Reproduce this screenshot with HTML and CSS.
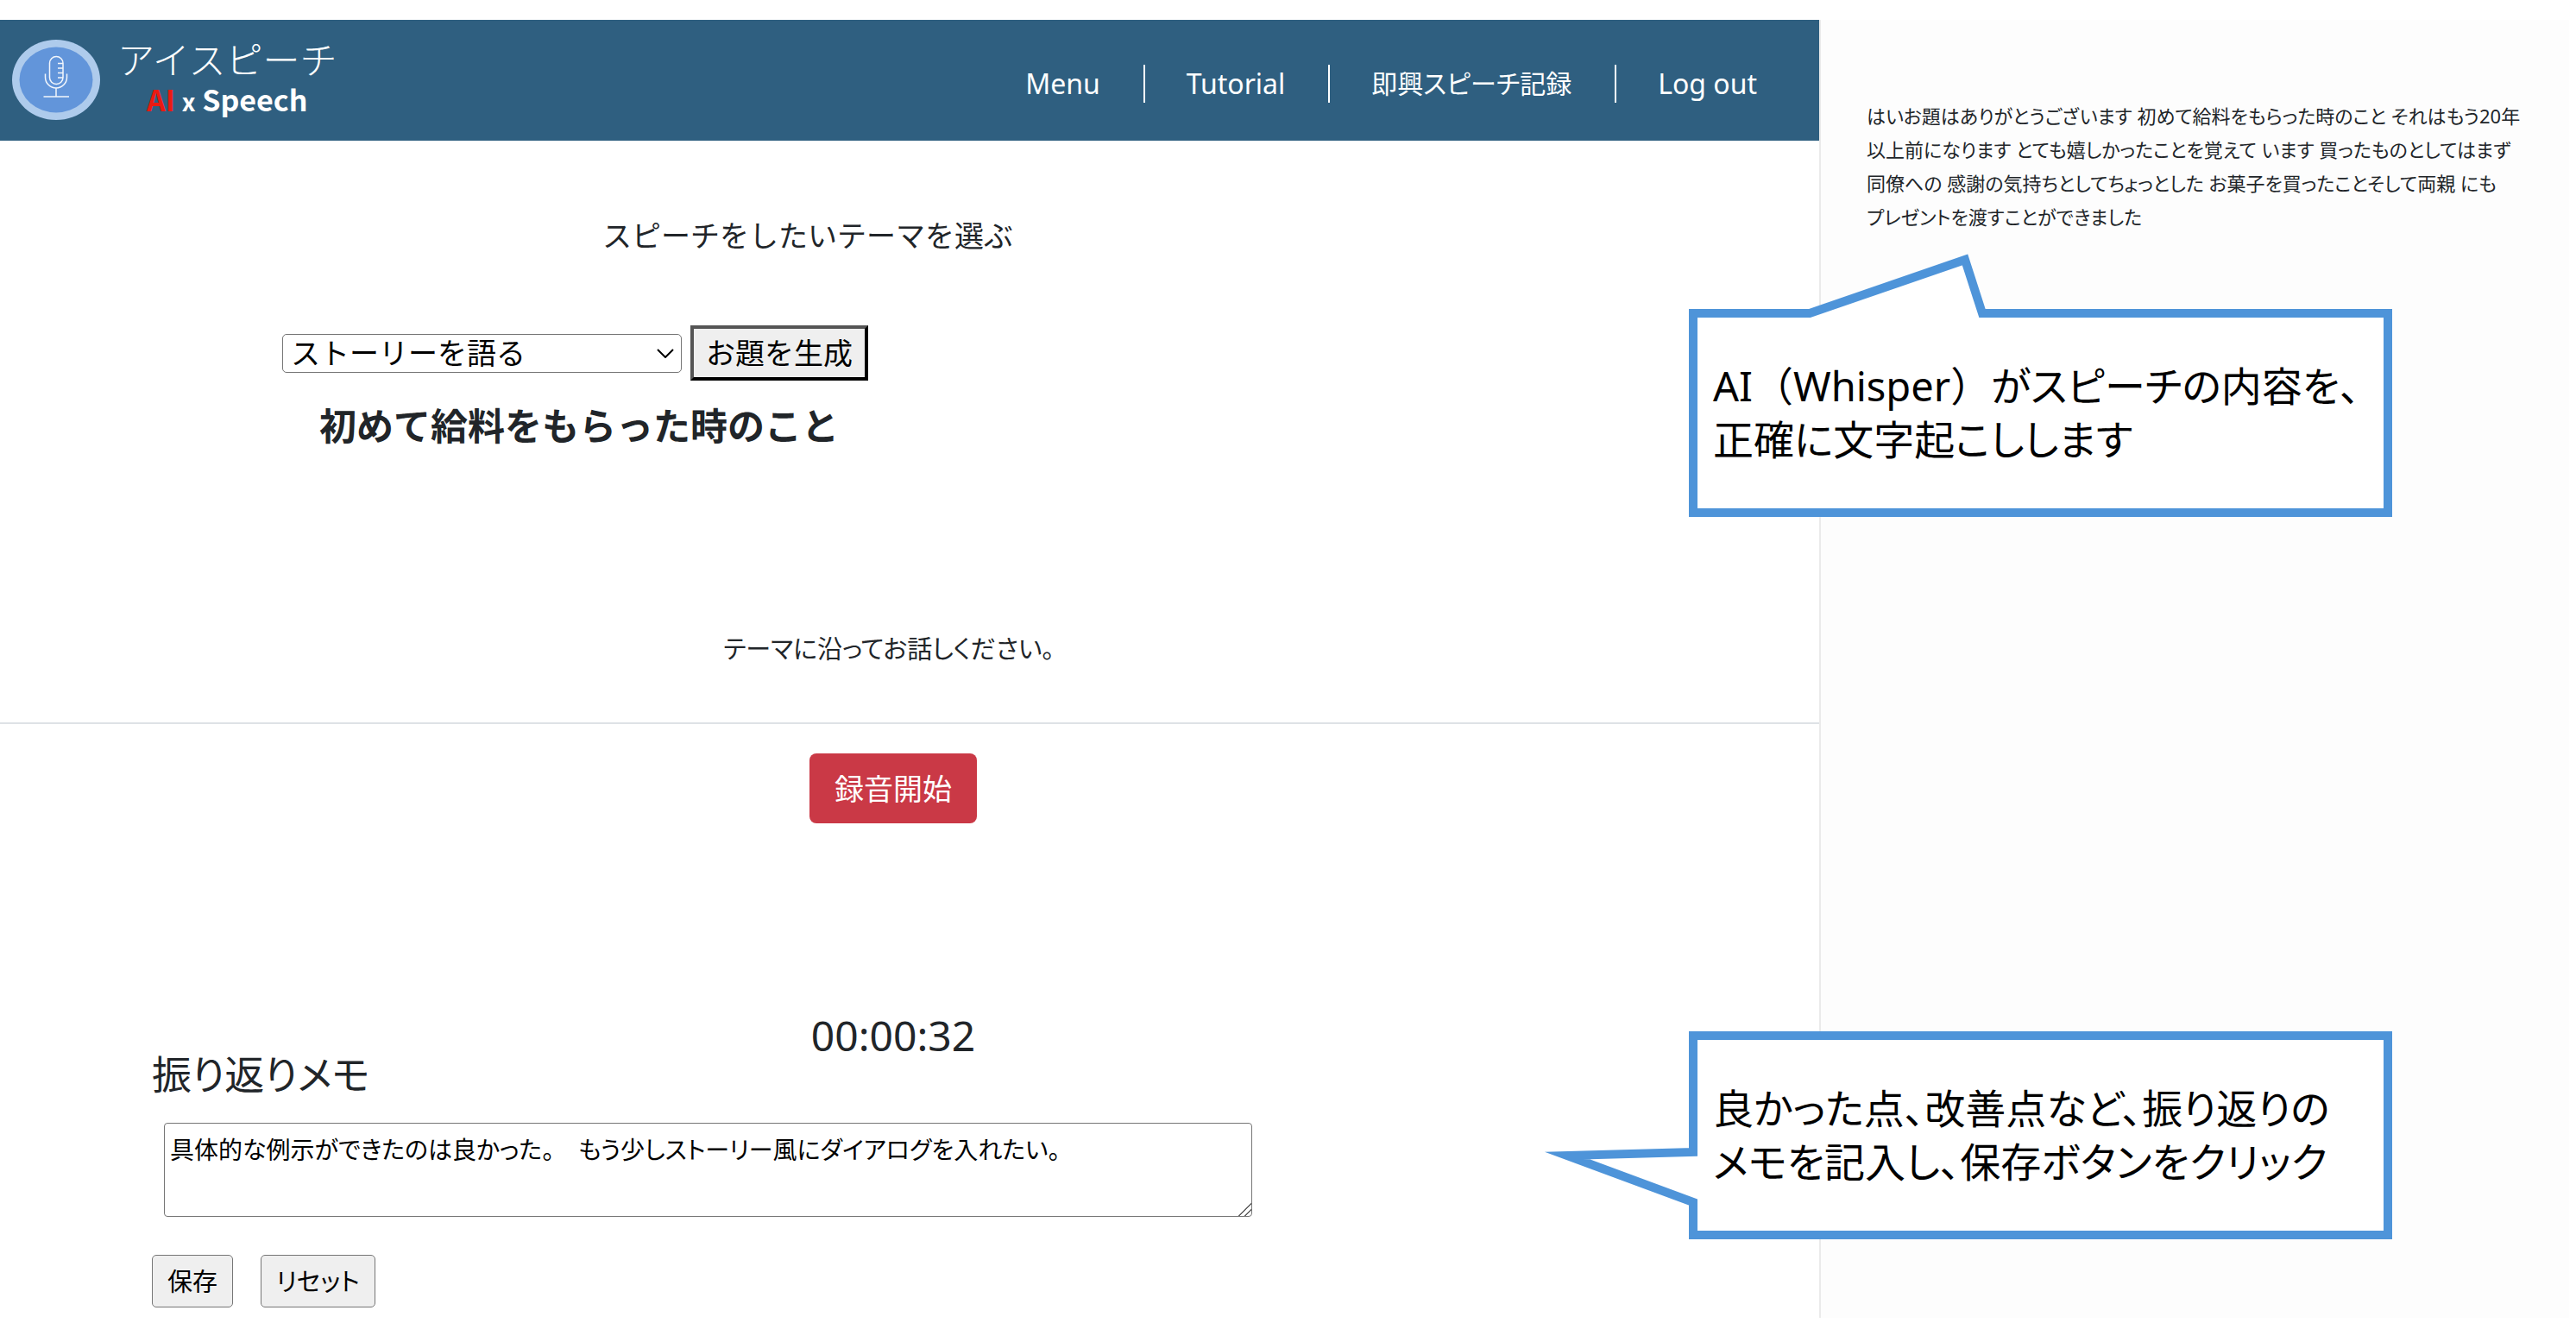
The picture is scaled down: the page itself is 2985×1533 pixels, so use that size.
FILE: index.html
```html
<!DOCTYPE html>
<html lang="ja">
<head>
<meta charset="utf-8">
<title>アイスピーチ</title>
<link rel="stylesheet" href="styles.css">
</head>
<body>
<div class="page">
  <div class="app">
    <header class="header">
      <a class="brand" href="#">
        <svg class="brand-mark" viewBox="0 0 102 93" aria-hidden="true">
          <ellipse cx="51" cy="46.500" rx="51" ry="46.500" fill="#aecbec"/>
          <ellipse cx="51" cy="46.500" rx="42.500" ry="38" fill="#6295da"/>
          <g fill="none" stroke="#f2f6fc" stroke-width="1.500">
            <rect x="43.500" y="19.500" width="15.500" height="32" rx="7.750"/>
            <path d="M53 27.500h6M53 33h6M53 38.500h6M53 44h6M38.500 39.500v4a12.500 12.500 0 0 0 25 0v-4M51 56v9.500M36.500 66h29.500"/>
          </g>
        </svg>
        <span class="brand-text">
          <span class="brand-name">アイスピーチ</span>
          <span class="brand-sub"><span class="brand-ai">AI</span> <span class="brand-x">x</span> Speech</span>
        </span>
      </a>
      <nav class="nav">
        <a href="#">Menu</a>
        <a href="#">Tutorial</a>
        <a class="nav-ja" href="#">即興スピーチ記録</a>
        <a href="#">Log out</a>
      </nav>
    </header>
    <main>
      <section class="theme">
        <label class="theme-label" for="theme">スピーチをしたいテーマを選ぶ</label>
        <div class="picker">
          <span class="select">
            <select id="theme"><option>ストーリーを語る</option></select>
            <svg viewBox="0 0 20 11" aria-hidden="true"><path d="M1 1l9 9 9-9" fill="none" stroke="#000" stroke-width="2"/></svg>
          </span>
          <button class="generate" type="button">お題を生成</button>
        </div>
        <h1 class="topic">初めて給料をもらった時のこと</h1>
        <p class="guide">テーマに沿ってお話しください。</p>
      </section>
      <section class="recorder">
        <button class="record" type="button">録音開始</button>
        <time class="timer">00:00:32</time>
      </section>
      <form class="memo">
        <label class="memo-label" for="memo">振り返りメモ</label>
        <textarea class="memo-text" id="memo">具体的な例示ができたのは良かった。　もう少しストーリー風にダイアログを入れたい。</textarea>
        <div class="actions">
          <button type="button">保存</button>
          <button type="button">リセット</button>
        </div>
      </form>
    </main>
  </div>
  <aside class="transcript">
    <p>はいお題はありがとうございます 初めて給料をもらった時のこと それはもう20年<br>以上前になります とても嬉しかったことを覚えて います 買ったものとしてはまず<br>同僚への 感謝の気持ちとしてちょっとした お菓子を買ったことそして両親 にも<br>プレゼントを渡すことができました</p>
  </aside>
  <div class="callout callout-transcript">
    <svg viewBox="0 0 815 241" aria-hidden="true"><path d="M5 5H140L320-57 340 5H810V236H5Z"/></svg>
    <p>AI<span class="full-width">（Whisper）</span>がスピーチの内容を、<br>正確に文字起こしします</p>
  </div>
  <div class="callout callout-memo">
    <svg viewBox="0 0 815 241" aria-hidden="true"><path d="M5 5H810V236H5V198L-141 144 5 140Z"/></svg>
    <p>良かった点、改善点など、振り返りの<br>メモを記入し、保存ボタンをクリック</p>
  </div>
</div>
</body>
</html>
```
FILE: styles.css
```css
* { box-sizing: border-box; }

body {
  margin: 0;
  background: #fff;
  color: #212529;
  font-family: "Noto Sans", "Noto Sans CJK JP", sans-serif;
  font-size: 34px;
  line-height: 48px;
}

h1, p { margin: 0; }
a { color: inherit; text-decoration: none; }
button, select, textarea { font: inherit; color: #000; }

.page {
  position: relative;
  display: grid;
  grid-template-columns: minmax(0, 2108fr) minmax(0, 877fr);
  padding: 23px 0 5px;
}

/* Header */
.header {
  display: flex;
  justify-content: space-between;
  align-items: center;
  height: 140px;
  padding: 0 72px 2px 14px;
  background: #2f5f80;
  color: #fff;
}
.brand { display: flex; align-items: center; gap: 20px; }
.brand-mark { width: 102px; height: 93px; }
.brand-text {
  display: flex;
  flex-direction: column;
  align-items: center;
  font-family: "Noto Sans CJK JP", sans-serif;
  line-height: 48px;
}
.brand-name { font-size: 43px; font-weight: 300; }
.brand-sub { font-size: 34px; font-weight: 700; }
.brand-ai { color: #ea1a12; }
.brand-x { font-size: 28px; }

.nav {
  display: flex;
  align-items: center;
  padding-top: 10px;
  font-size: 32px;
  font-feature-settings: "palt";
  line-height: 44px;
}
.nav a + a {
  margin-left: 50px;
  padding-left: 48px;
  border-left: 2px solid #fff;
}
.nav .nav-ja { font-size: 30px; }

/* Theme */
.theme { border-bottom: 2px solid #dee2e6; padding-bottom: 61px; }
.theme-label {
  display: block;
  padding: 86px 236px 0 0;
  text-align: center;
}
.picker {
  display: flex;
  align-items: center;
  gap: 10px;
  margin: 80px 0 0 327px;
}
.select { display: grid; width: 463px; align-items: center; }
.select > * { grid-area: 1 / 1; }
.select select {
  appearance: none;
  height: 45px;
  padding: 0 9px;
  border: 1px solid #767676;
  border-radius: 5px;
  background: #fff;
  line-height: 40px;
}
.select svg { width: 20px; margin-right: 9px; justify-self: end; pointer-events: none; }
.generate {
  height: 64px;
  padding: 0 14px;
  border: 4px solid #000;
  border-top-color: #555;
  border-left-color: #555;
  background: #efefef;
}
.topic {
  margin: 25px 0 0 370px;
  font-size: 43px;
  line-height: 56px;
}
.guide {
  margin-top: 206px;
  padding-right: 48px;
  font-feature-settings: "palt";
  font-size: 29px;
  text-align: center;
}

/* Recorder */
.recorder {
  display: flex;
  flex-direction: column;
  align-items: center;
  padding: 34px 38px 0 0;
}
.record {
  height: 81px;
  padding: 0 29px;
  border: 0;
  border-radius: 8px;
  background: #ca3946;
  color: #fff;
}
.timer { margin-top: 223px; font-size: 48px; line-height: 46px; }

/* Memo */
.memo { display: flow-root; padding-left: 176px; font-feature-settings: "palt"; }
.memo-label { display: block; font-size: 46px; line-height: 42px; }
.memo-text {
  display: block;
  width: 1261px;
  height: 109px;
  margin: 36px 0 0 14px;
  padding: 6px;
  border: 1px solid #767676;
  border-radius: 4px;
  font-size: 28px;
  font-feature-settings: "palt";
}
.memo-text::-webkit-resizer {
  background: linear-gradient(135deg, transparent 48%, #666 48%, #666 54%, transparent 54%, transparent 72%, #666 72%, #666 78%, transparent 78%);
}
.actions { display: flex; gap: 32px; margin: 44px 0 12px; }
.actions button {
  height: 61px;
  padding: 0 17px;
  border: 1px solid #767676;
  border-radius: 5px;
  background: #efefef;
  font-size: 29px;
  font-feature-settings: "palt";
}

/* Transcript */
.transcript {
  margin-right: 8px;
  padding: 92px 0 0 53px;
  border-left: 2px solid #ebebeb;
  background: #fdfdfd;
  font-feature-settings: "palt";
  font-size: 22px;
  line-height: 39px;
  white-space: nowrap;
}

/* Callouts laid over the page */
.callout {
  position: absolute;
  right: 213px;
  width: 815px;
  height: 241px;
  padding: 58px 0 0 28px;
  color: #000;
  font-feature-settings: "palt";
  font-size: 47px;
  line-height: 62px;
  white-space: nowrap;
}
.callout svg { position: absolute; inset: 0; overflow: visible; }
.callout path { fill: #fff; stroke: #4e94d9; stroke-width: 10; stroke-miterlimit: 12; }
.callout p { position: relative; }
.callout-transcript { top: 358px; }
.callout-memo { top: 1195px; }
.full-width { font-feature-settings: normal; }
```
